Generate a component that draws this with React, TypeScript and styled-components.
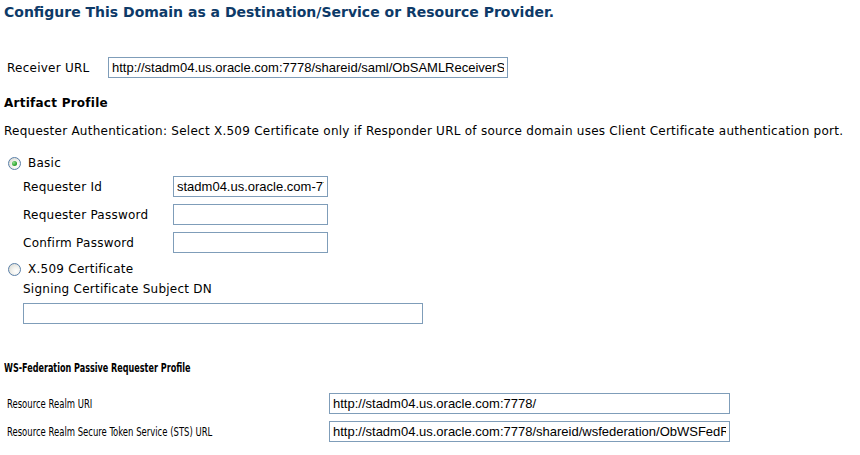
import styled, { createGlobalStyle } from 'styled-components'

const GlobalStyle = createGlobalStyle`
  body {
    margin: 0;
    background: #fff;
  }
`

const Page = styled.div`
  padding: 0 4px;
  font-family: 'DejaVu Sans', Verdana, sans-serif;
  font-size: 12px;
  letter-spacing: 0.25px;
  color: #000;
  width: 860px;
  box-sizing: border-box;
`

const Title = styled.h1`
  margin: 0;
  padding-top: 4px;
  font-size: 14px;
  line-height: 16px;
  font-weight: bold;
  letter-spacing: 0;
  color: #0d3a68;
`

const Heading = styled.div<{ $top: number }>`
  margin-top: ${(p) => p.$top}px;
  line-height: 16px;
  font-weight: bold;
`

// the lower block of the page is set in a squeezed face
const Narrow = styled.span<{ $scale: number }>`
  display: inline-block;
  white-space: nowrap;
  font-family: 'DejaVu Sans Condensed', 'DejaVu Sans', sans-serif;
  font-size: 13px;
  letter-spacing: 0;
  transform: scaleX(${(p) => p.$scale});
  transform-origin: left center;
`

const Text = styled.div<{ $top: number; $indent?: number }>`
  margin-top: ${(p) => p.$top}px;
  padding-left: ${(p) => p.$indent ?? 0}px;
  line-height: 16px;
  white-space: nowrap;
`

const Row = styled.div<{ $top: number; $indent: number }>`
  display: flex;
  align-items: center;
  height: 21px;
  margin-top: ${(p) => p.$top}px;
  padding-left: ${(p) => p.$indent}px;
`

const Label = styled.label<{ $width: number }>`
  width: ${(p) => p.$width}px;
  flex: none;
  white-space: nowrap;
`

const Field = styled.input<{ $width: number }>`
  width: ${(p) => p.$width}px;
  height: 21px;
  box-sizing: border-box;
  margin: 0;
  padding: 1px 3px;
  border: 1px solid #7f9db9;
  font-family: 'Liberation Sans', Arial, sans-serif;
  font-size: 13px;
  letter-spacing: 0;
  color: #000;
  background: #fff;
  outline: none;
`

const RadioLine = styled.div<{ $top: number }>`
  display: flex;
  align-items: center;
  gap: 7px;
  margin-top: ${(p) => p.$top}px;
  padding-left: 4px;
  height: 16px;
`

const Radio = styled.span<{ $checked?: boolean }>`
  position: relative;
  width: 13px;
  height: 13px;
  box-sizing: border-box;
  border-radius: 50%;
  border: 1px solid #5a7fa8;
  background: radial-gradient(circle at 65% 65%, #fff 0%, #f2f2ee 40%, #d4d4cc 100%);
  flex: none;

  &::after {
    content: '';
    display: ${(p) => (p.$checked ? 'block' : 'none')};
    position: absolute;
    left: 3px;
    top: 3px;
    width: 5px;
    height: 5px;
    border-radius: 50%;
    background: radial-gradient(circle at 35% 35%, #8fe08f 0%, #2ea52e 60%, #1d821d 100%);
  }
`

const App = () => (
  <Page>
    <GlobalStyle />
    <Title>Configure This Domain as a Destination/Service or Resource Provider.</Title>

    <Row $top={37} $indent={3}>
      <Label $width={101}>Receiver URL</Label>
      <Field $width={400} readOnly value="http://stadm04.us.oracle.com:7778/shareid/saml/ObSAMLReceiverServlet" />
    </Row>

    <Heading $top={17}>Artifact Profile</Heading>
    <Text $top={12}>
      Requester Authentication: Select X.509 Certificate only if Responder URL of source domain uses Client
      Certificate authentication port.
    </Text>

    <RadioLine $top={16}>
      <Radio $checked />
      Basic
    </RadioLine>
    <Row $top={5} $indent={19}>
      <Label $width={150}>Requester Id</Label>
      <Field $width={155} readOnly value="stadm04.us.oracle.com-7778" />
    </Row>
    <Row $top={7} $indent={19}>
      <Label $width={150}>Requester Password</Label>
      <Field $width={155} type="password" readOnly value="" />
    </Row>
    <Row $top={7} $indent={19}>
      <Label $width={150}>Confirm Password</Label>
      <Field $width={155} type="password" readOnly value="" />
    </Row>

    <RadioLine $top={8}>
      <Radio />
      X.509 Certificate
    </RadioLine>
    <Text $top={4} $indent={19}>
      Signing Certificate Subject DN
    </Text>
    <Row $top={6} $indent={19}>
      <Field $width={400} readOnly value="" />
    </Row>

    <Heading $top={36}>
      <Narrow $scale={0.69}>WS-Federation Passive Requester Profile</Narrow>
    </Heading>
    <Row $top={17} $indent={3}>
      <Label $width={322}>
        <Narrow $scale={0.725}>Resource Realm URI</Narrow>
      </Label>
      <Field $width={401} readOnly value="http://stadm04.us.oracle.com:7778/" />
    </Row>
    <Row $top={7} $indent={3}>
      <Label $width={322}>
        <Narrow $scale={0.725}>Resource Realm Secure Token Service (STS) URL</Narrow>
      </Label>
      <Field $width={401} readOnly value="http://stadm04.us.oracle.com:7778/shareid/wsfederation/ObWSFedRequesterServlet" />
    </Row>
  </Page>
)

export default App
